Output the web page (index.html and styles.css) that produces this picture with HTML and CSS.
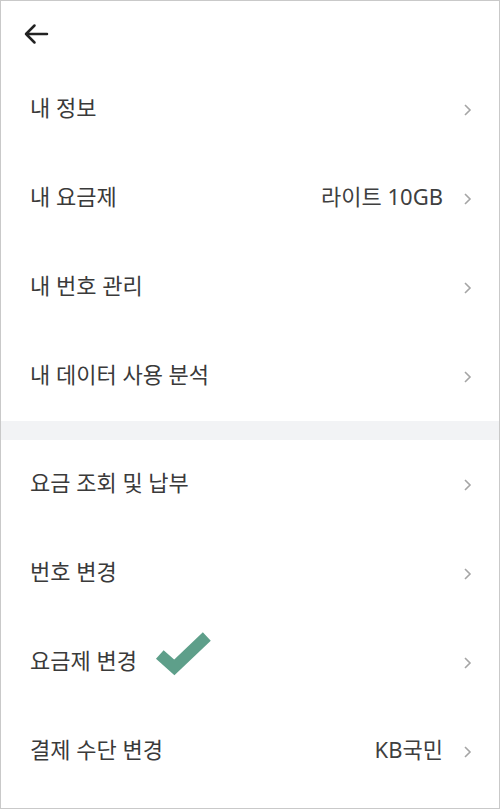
FILE: index.html
```html
<!DOCTYPE html>
<html lang="ko">
<head>
<meta charset="utf-8">
<link rel="stylesheet" href="styles.css">
</head>
<body>
<div class="screen">
  <header class="header">
    <svg class="back" width="26" height="22" viewBox="0 0 26 22"><path d="M24 11H3M11.5 2.5L3 11l8.5 8.5" fill="none" stroke="#222" stroke-width="2.5" stroke-linecap="round" stroke-linejoin="round"/></svg>
  </header>
  <ul class="list">
    <li class="row"><span class="label">내 정보</span><span class="right"><svg class="chev" width="9" height="14" viewBox="0 0 9 14"><path d="M2 2l5 5-5 5" fill="none" stroke="#a5a5a5" stroke-width="1.6"/></svg></span></li>
    <li class="row"><span class="label">내 요금제</span><span class="right"><span class="value">라이트 10GB</span><svg class="chev" width="9" height="14" viewBox="0 0 9 14"><path d="M2 2l5 5-5 5" fill="none" stroke="#a5a5a5" stroke-width="1.6"/></svg></span></li>
    <li class="row"><span class="label">내 번호 관리</span><span class="right"><svg class="chev" width="9" height="14" viewBox="0 0 9 14"><path d="M2 2l5 5-5 5" fill="none" stroke="#a5a5a5" stroke-width="1.6"/></svg></span></li>
    <li class="row"><span class="label">내 데이터 사용 분석</span><span class="right"><svg class="chev" width="9" height="14" viewBox="0 0 9 14"><path d="M2 2l5 5-5 5" fill="none" stroke="#a5a5a5" stroke-width="1.6"/></svg></span></li>
  </ul>
  <div class="divider"></div>
  <ul class="list">
    <li class="row"><span class="label">요금 조회 및 납부</span><span class="right"><svg class="chev" width="9" height="14" viewBox="0 0 9 14"><path d="M2 2l5 5-5 5" fill="none" stroke="#a5a5a5" stroke-width="1.6"/></svg></span></li>
    <li class="row"><span class="label">번호 변경</span><span class="right"><svg class="chev" width="9" height="14" viewBox="0 0 9 14"><path d="M2 2l5 5-5 5" fill="none" stroke="#a5a5a5" stroke-width="1.6"/></svg></span></li>
    <li class="row row-check"><span class="label">요금제 변경</span>
      <svg class="check" width="62" height="50" viewBox="0 0 62 50"><path d="M5.8 22.5L20.3 35.4 52.8 4.5" fill="none" stroke="#5e9f8a" stroke-width="11.5" stroke-linejoin="miter"/></svg>
      <span class="right"><svg class="chev" width="9" height="14" viewBox="0 0 9 14"><path d="M2 2l5 5-5 5" fill="none" stroke="#a5a5a5" stroke-width="1.6"/></svg></span></li>
    <li class="row"><span class="label">결제 수단 변경</span><span class="right"><span class="value">KB국민</span><svg class="chev" width="9" height="14" viewBox="0 0 9 14"><path d="M2 2l5 5-5 5" fill="none" stroke="#a5a5a5" stroke-width="1.6"/></svg></span></li>
  </ul>
</div>
</body>
</html>
```
FILE: styles.css
```css
* { box-sizing: border-box; }
html, body { margin: 0; padding: 0; background: #fff; }
body { font-family: "Noto Sans", "Noto Sans CJK KR", sans-serif; color: #333; }
.screen {
  width: 500px;
  height: 809px;
  border: 1px solid #c9c9c9;
  overflow: hidden;
  background: #fff;
}
.header {
  height: 64px;
  display: flex;
  align-items: center;
  padding-left: 22px;
  padding-top: 2px;
}
.back { display: block; }
.list { list-style: none; margin: 0; padding: 0; }
.row {
  position: relative;
  height: 89px;
  display: flex;
  align-items: center;
  justify-content: space-between;
  padding: 0 27px 0 29px;
  font-size: 22px;
  letter-spacing: 0;
  color: #3a3a3a;
}
.label, .value { line-height: 1.3; padding-bottom: 4px; }
.right { display: flex; align-items: center; gap: 20px; }
.value { color: #3f3f3f; }
.chev { display: block; }
.divider { height: 19px; background: #f2f3f5; }
.check {
  position: absolute;
  left: 153px;
  top: 14px;
}
```
